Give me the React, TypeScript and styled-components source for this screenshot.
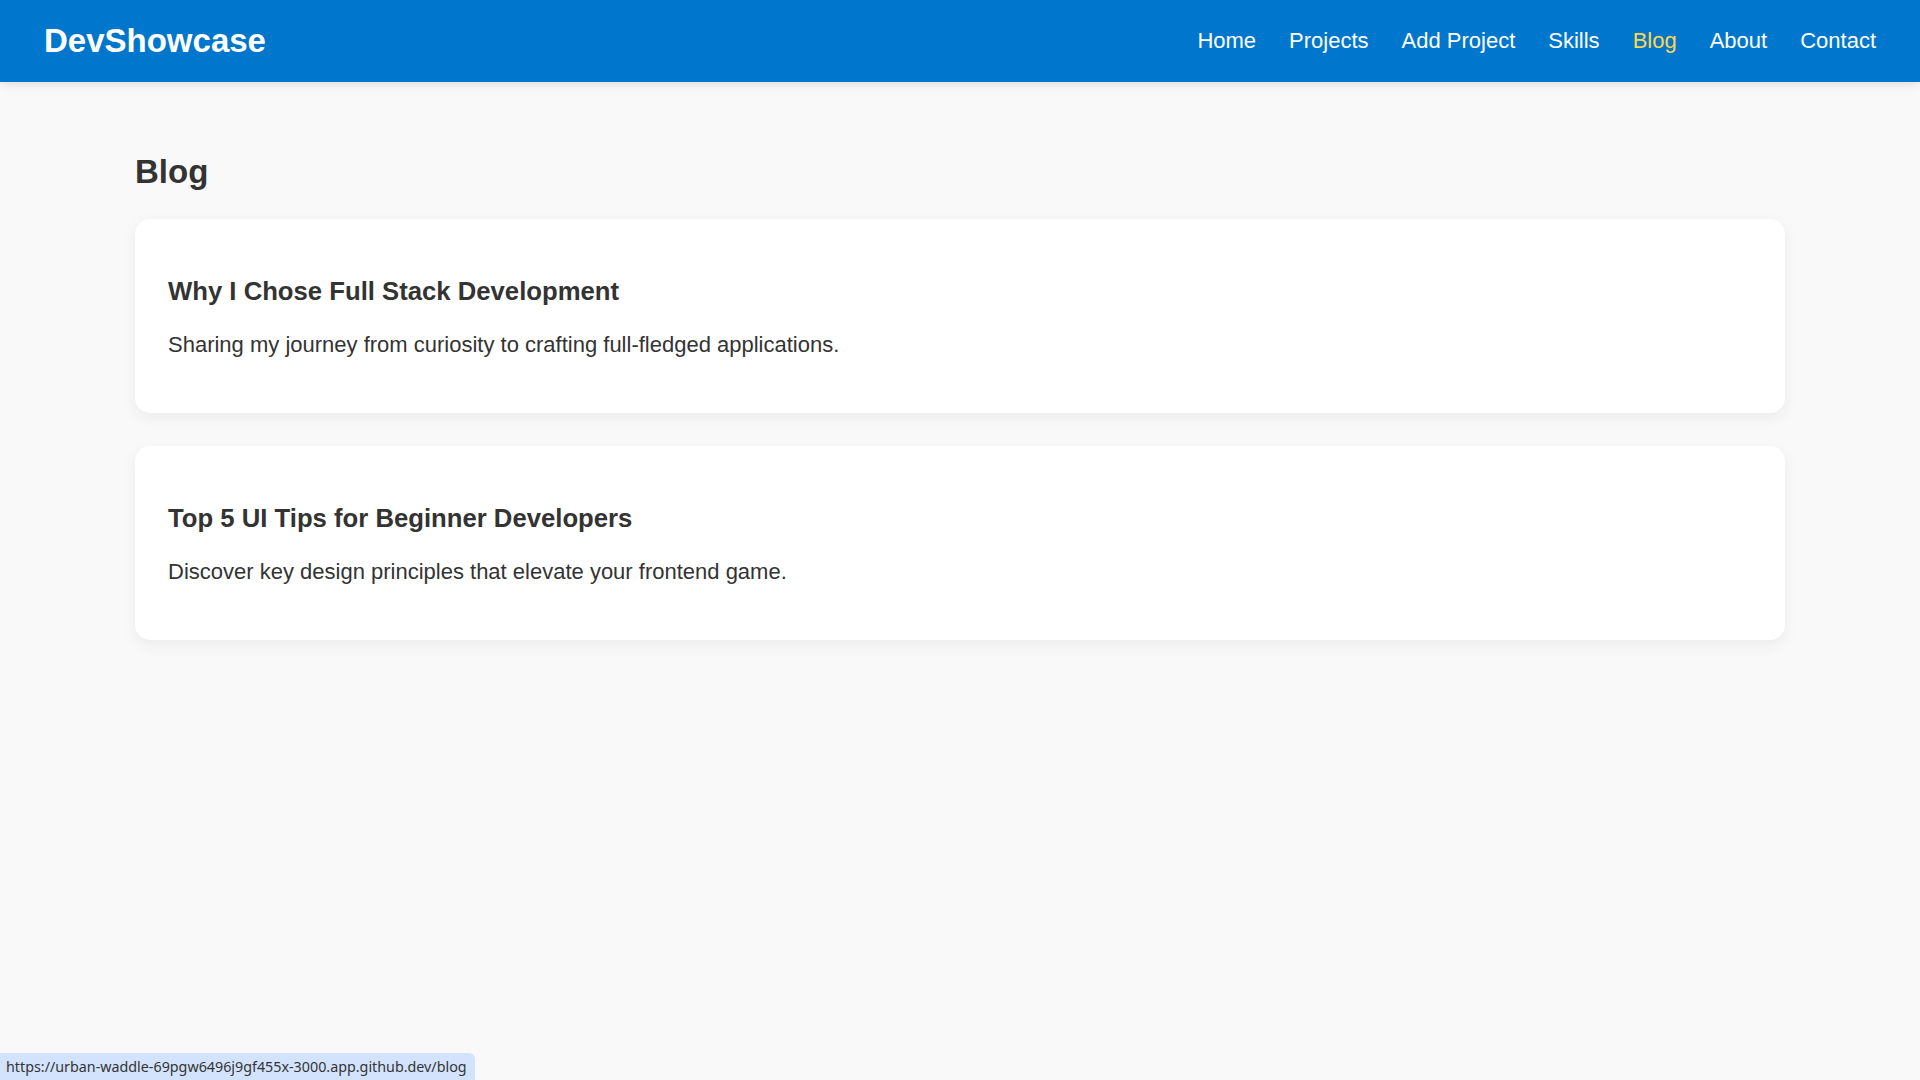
import React from "react";
import styled, { createGlobalStyle } from "styled-components";

const GlobalStyle = createGlobalStyle`
  html, body {
    margin: 0;
    padding: 0;
    background: #f9f9f9;
    font-family: "Liberation Sans", Arial, sans-serif;
    color: #333;
  }
  #root { min-height: 100vh; }
`;

const Header = styled.header`
  height: 82px;
  background: #0077cc;
  display: flex;
  align-items: center;
  justify-content: space-between;
  padding: 0 44px;
  box-shadow: 0 2px 10px rgba(0, 0, 0, 0.12);
  position: relative;
  z-index: 1;
`;

const Logo = styled.div`
  color: #fff;
  font-size: 33px;
  font-weight: 700;
  margin-top: -1px;
`;

const Nav = styled.nav`
  display: flex;
  align-items: center;
  gap: 33px;
`;

const NavLink = styled.a<{ $active?: boolean }>`
  color: ${(p) => (p.$active ? "#ffd54f" : "#ffffff")};
  font-size: 22px;
  text-decoration: none;
  cursor: pointer;
`;

const Main = styled.main`
  width: 1650px;
  margin: 0 auto;
  padding-top: 71px;
  display: flex;
  flex-direction: column;
`;

const PageTitle = styled.h2`
  font-size: 33px;
  font-weight: 700;
  margin: 0 0 28px;
  line-height: 38px;
  color: #333;
`;

const PostList = styled.div`
  display: flex;
  flex-direction: column;
  gap: 33px;
`;

const Card = styled.article`
  background: #fff;
  border-radius: 15px;
  padding: 33px;
  box-shadow: 0 5px 15px rgba(0, 0, 0, 0.06);
  height: 194px;
  box-sizing: border-box;
`;

const PostTitle = styled.h3`
  font-size: 25.7px;
  font-weight: 700;
  line-height: 30px;
  margin: 24px 0 26px;
  color: #333;
`;

const PostExcerpt = styled.p`
  font-size: 22px;
  line-height: 25px;
  margin: 0;
  color: #333;
`;

const StatusBar = styled.div`
  position: fixed;
  left: 0;
  bottom: 0;
  height: 27px;
  padding: 0 8px 0 6px;
  display: flex;
  align-items: center;
  background: #d3e3fd;
  border-top-right-radius: 6px;
  color: #333;
  font-family: "Noto Sans", "Open Sans", sans-serif;
  font-size: 14.3px;
`;

const links = ["Home", "Projects", "Add Project", "Skills", "Blog", "About", "Contact"];

const posts = [
  {
    title: "Why I Chose Full Stack Development",
    excerpt: "Sharing my journey from curiosity to crafting full-fledged applications.",
  },
  {
    title: "Top 5 UI Tips for Beginner Developers",
    excerpt: "Discover key design principles that elevate your frontend game.",
  },
];

export default function App() {
  return (
    <>
      <GlobalStyle />
      <Header>
        <Logo>DevShowcase</Logo>
        <Nav>
          {links.map((l) => (
            <NavLink key={l} $active={l === "Blog"}>
              {l}
            </NavLink>
          ))}
        </Nav>
      </Header>
      <Main>
        <PageTitle>Blog</PageTitle>
        <PostList>
          {posts.map((p) => (
            <Card key={p.title}>
              <PostTitle>{p.title}</PostTitle>
              <PostExcerpt>{p.excerpt}</PostExcerpt>
            </Card>
          ))}
        </PostList>
      </Main>
      <StatusBar>https://urban-waddle-69pgw6496j9gf455x-3000.app.github.dev/blog</StatusBar>
    </>
  );
}
